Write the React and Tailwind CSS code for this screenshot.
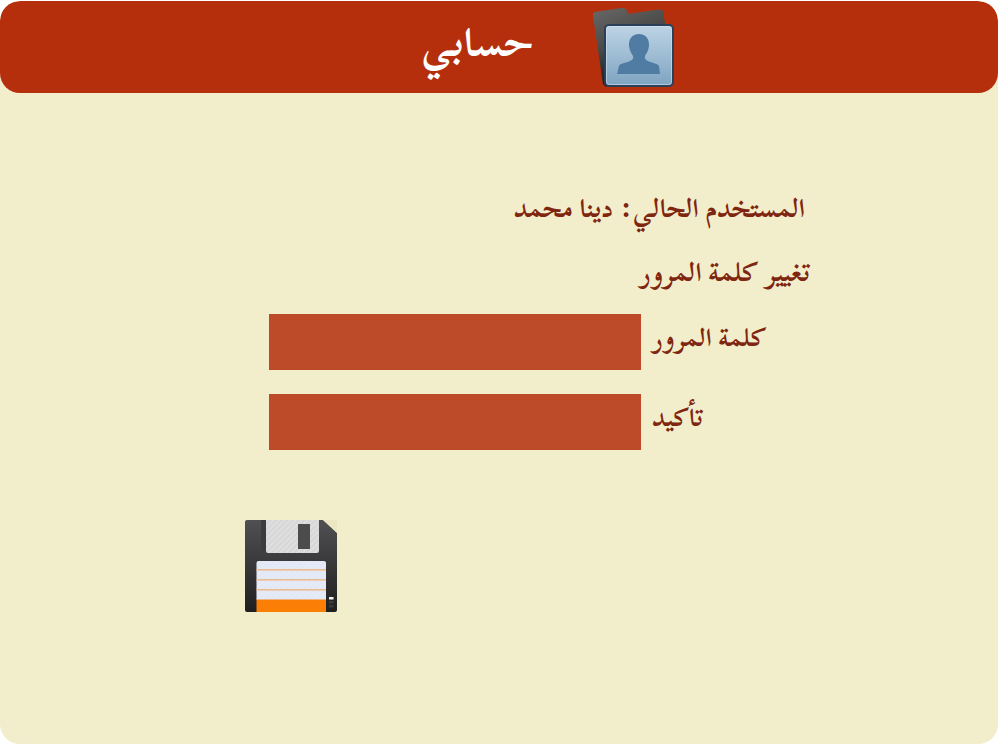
function FolderIcon() {
  return (
    <svg width="84" height="82" viewBox="592 6 84 82" className="block">
      <defs>
        <linearGradient id="back" x1="0.1" y1="0" x2="0.5" y2="1">
          <stop offset="0" stopColor="#666" />
          <stop offset="0.45" stopColor="#4a4a48" />
          <stop offset="1" stopColor="#0c0c0c" />
        </linearGradient>
        <linearGradient id="front" x1="0" y1="0" x2="0" y2="1">
          <stop offset="0" stopColor="#bed4e5" />
          <stop offset="1" stopColor="#7ea4c1" />
        </linearGradient>
      </defs>
      <path d="M595 12 L621 8 Q626 7.5 627 11 L627.500 14 L659 9.500 Q663 9 663.500 13 L666 30 L606 87 L603 84 L593 16 Q592.500 12.500 595 12 Z" fill="url(#back)" />
      <rect x="605" y="25" width="68" height="61" rx="4" fill="url(#front)" stroke="#2a4058" strokeWidth="2" />
      <rect x="606.500" y="26.500" width="65" height="58" rx="3" fill="none" stroke="#d8e6f0" strokeOpacity="0.55" />
      <path d="M639 34 C632 34 628.500 39 629 46 C629.500 51 632 54 633 56 C633.500 58 633 60 630 61 C626 63 620 63 619 66 L617 74 L660 74 L659 66 C657 63 652 63 648 61 C645 60 644.500 58 645 56 C646 54 648.500 51 649 46 C649.500 39 646 34 639 34 Z" fill="#507ca4" />
    </svg>
  );
}

function FloppyIcon() {
  return (
    <svg width="92" height="92" viewBox="245 520 92 92" className="block">
      <defs>
        <linearGradient id="body" x1="0" y1="0" x2="0" y2="1">
          <stop offset="0" stopColor="#505052" />
          <stop offset="1" stopColor="#1f1f20" />
        </linearGradient>
        <pattern id="hatch" width="4" height="4" patternUnits="userSpaceOnUse" patternTransform="rotate(45)">
          <rect width="2" height="4" fill="#ffffff" fillOpacity="0.22" />
        </pattern>
      </defs>
      <path d="M247 520 H323 L337 533 V610 Q337 612 335 612 H247 Q245 612 245 610 V522 Q245 520 247 520 Z" fill="url(#body)" />
      <path d="M323 520 L337 533 V520 Z" fill="#e8e2bd" opacity="0.6" />
      <rect x="261" y="520" width="5" height="31" fill="#3c3c3e" />
      <path d="M266 520 H319 V551 Q319 553 317 553 H268 Q266 553 266 551 Z" fill="#d6d6d6" />
      <path d="M266 520 H319 V551 Q319 553 317 553 H268 Q266 553 266 551 Z" fill="url(#hatch)" />
      <rect x="298" y="524" width="12" height="25" fill="#4c4c4e" />
      <path d="M256.500 563 Q256.500 561 258.500 561 H324 Q326 561 326 563 V600 H256.500 Z" fill="#e2e8f6" />
      <path d="M256.500 561 H326 V600 H256.500 Z" fill="url(#hatch)" opacity="0.5" />
      <rect x="256.500" y="569" width="69.500" height="1.600" fill="#edbb90" />
      <rect x="256.500" y="579" width="69.500" height="1.600" fill="#edbb90" />
      <rect x="256.500" y="589" width="69.500" height="1.600" fill="#edbb90" />
      <rect x="256.500" y="599.500" width="69.500" height="12.500" fill="#fb7f06" />
      <rect x="329" y="597" width="4.500" height="2.500" fill="#f2f2f2" />
      <rect x="329" y="601" width="4.500" height="2.500" fill="#3a3a3a" />
      <rect x="329" y="605" width="4.500" height="2.500" fill="#3a3a3a" />
    </svg>
  );
}

export default function App() {
  return (
    <div className="w-[998px] h-[743px] mt-px bg-[#f2edca] rounded-[20px] overflow-hidden flex flex-col font-['Scheherazade_New',serif] font-bold text-[#7f2610]">
      <header className="h-[92px] shrink-0 bg-[#b52f0d] rounded-[20px] flex justify-end items-center gap-[58px] pr-[322px]">
        <h1 dir="rtl" className="text-white text-[41px] leading-[64px] pb-[8px]">حسابي</h1>
        <FolderIcon />
      </header>
      <main className="flex flex-col">
        <p dir="rtl" className="mt-[93px] mr-[193px] text-[26.5px] leading-[44px] text-right">المستخدم الحالي: دينا محمد</p>
        <p dir="rtl" className="mt-[20px] mr-[188px] text-[26.5px] leading-[44px] text-right">تغيير كلمة المرور</p>
        <div className="mt-[20px] ml-[269px] flex items-center gap-[11px] h-[56px]">
          <input type="password" className="w-[372px] h-[56px] bg-[#bd4b2a] border-0 outline-none" />
          <label dir="rtl" className="text-[25.5px] leading-[44px] pb-[8px]">كلمة المرور</label>
        </div>
        <div className="mt-[24px] ml-[269px] flex items-center gap-[11px] h-[56px]">
          <input type="password" className="w-[372px] h-[56px] bg-[#bd4b2a] border-0 outline-none" />
          <label dir="rtl" className="text-[25.5px] leading-[44px] pb-[8px]">تأكيد</label>
        </div>
        <button className="mt-[70px] ml-[245px] w-[92px] h-[92px]">
          <FloppyIcon />
        </button>
      </main>
    </div>
  );
}
